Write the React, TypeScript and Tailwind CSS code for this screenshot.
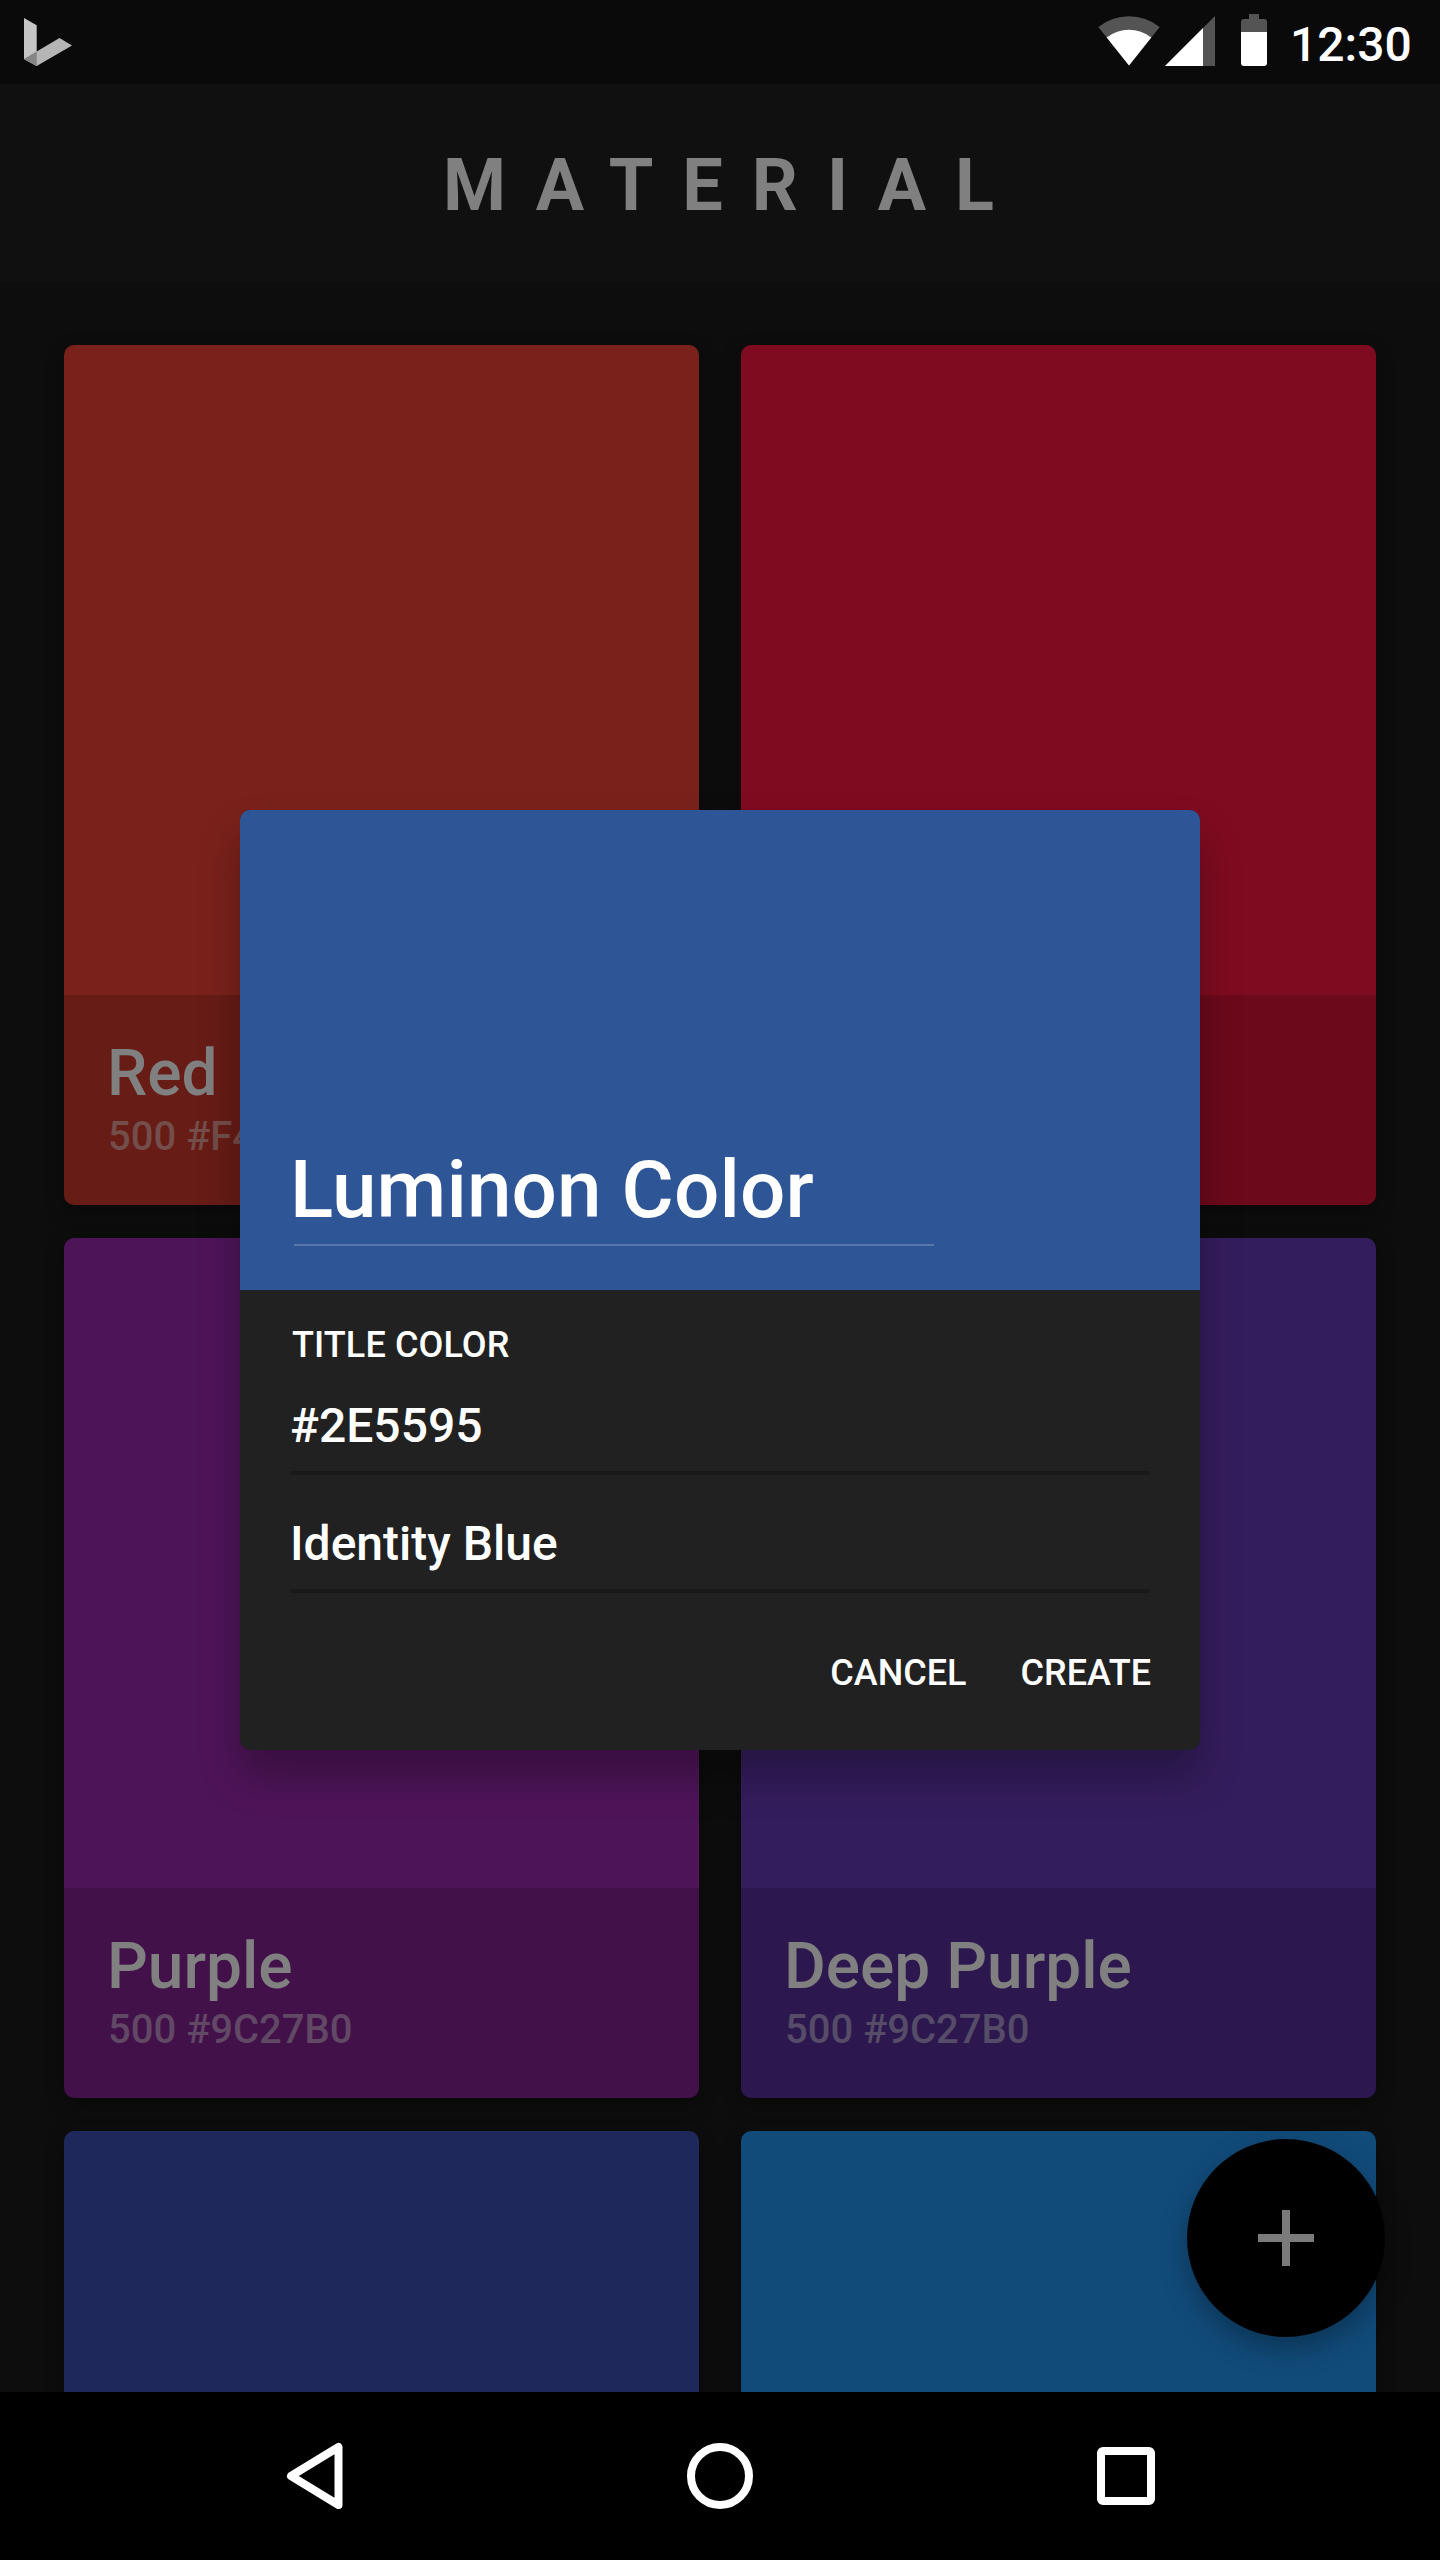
const SWATCHES = [
  { name: "Red", code: "500 #F44336", color: "bg-[#7a211b]" },
  { name: "", code: "", color: "bg-[#7f0b20]" },
  { name: "Purple", code: "500 #9C27B0", color: "bg-[#4e1458]" },
  { name: "Deep Purple", code: "500 #9C27B0", color: "bg-[#341d5c]" },
  { name: "", code: "", color: "bg-[#1f285a]" },
  { name: "", code: "", color: "bg-[#114b7a]" },
];

function StatusBar() {
  return (
    <div className="flex h-[84px] items-start justify-between bg-[#0a0a0a]">
      <svg width="80" height="84" viewBox="0 0 80 84">
        <path d="M24 18l12.7 7.2V66L24 59z" fill="#c5c5c5" />
        <path d="M24 59l35.5-21L72 45.6 36.7 66z" fill="#b5b5b5" />
        <path d="M24 59l12.7-7.5V66z" fill="#858585" />
      </svg>
      <div className="flex">
        <svg width="200" height="84" viewBox="1090 0 200 84">
          <path d="M1129 65.5L1098.3 27a49.5 49.5 0 0 1 61.4 0z" fill="#545454" />
          <path d="M1129 65.5L1106.7 37.5a36 36 0 0 1 44.6 0z" fill="#fff" />
          <path d="M1165 66h50V16z" fill="#545454" />
          <path d="M1165 66h38V28z" fill="#fff" />
          <path d="M1249 14h10v5h5a3 3 0 0 1 3 3v10h-26V22a3 3 0 0 1 3-3h5z" fill="#545454" />
          <path d="M1241 32h26v31a3 3 0 0 1-3 3h-20a3 3 0 0 1-3-3z" fill="#fff" />
        </svg>
        <span className="w-[150px] pt-[17px] text-[48px] leading-[56px] font-medium text-white">12:30</span>
      </div>
    </div>
  );
}

function Swatch({ name, code, color }: { name: string; code: string; color: string }) {
  return (
    <div className={`flex h-[860px] flex-col overflow-hidden rounded-[10px] shadow-[0_6px_18px_rgba(0,0,0,0.35)] ${color}`}>
      <div className="flex-1" />
      <div className="h-[210px] bg-black/15 pt-[41px] pl-[44px] font-medium">
        <div className="-ml-[1px] h-[77px] text-[64px] leading-[75px] text-[#808080]">{name}</div>
        <div className="text-[40px] leading-[47px] text-[#808080]/50">{code}</div>
      </div>
    </div>
  );
}

function Dialog() {
  return (
    <div className="absolute top-[810px] left-[240px] flex h-[940px] w-[960px] flex-col overflow-hidden rounded-[10px] bg-[#212121] text-white shadow-[0_26px_40px_rgba(0,0,0,0.28)]">
      <div className="flex h-[480px] flex-col justify-end bg-[#2e5595] pb-[44px] pl-[50px]">
        <div className="h-[101px] text-[80px] leading-[94px] font-medium tracking-[0.1px]">Luminon Color</div>
        <div className="ml-[4px] h-[2px] w-[640px] bg-white/20" />
      </div>
      <div className="flex flex-1 flex-col px-[50px] pt-[34px] font-medium">
        <div className="pl-[2px] text-[36px] leading-[42px] tracking-[0.1px]">TITLE COLOR</div>
        <div className="mt-[32px] h-[73px] text-[48px] leading-[56px]">#2E5595</div>
        <div className="h-[4px] rounded-full bg-[#191919]" />
        <div className="mt-[41px] h-[73px] text-[48px] leading-[56px]">Identity Blue</div>
        <div className="h-[4px] rounded-full bg-[#191919]" />
        <div className="-mr-[1px] flex justify-end gap-[54px] pt-[59px] text-[36px] leading-[42px]">
          <button>CANCEL</button>
          <button>CREATE</button>
        </div>
      </div>
    </div>
  );
}

export default function App() {
  return (
    <div className="relative flex h-[2560px] w-[1440px] flex-col overflow-hidden bg-[#0d0d0d] font-[Roboto,sans-serif]">
      <StatusBar />
      <header className="flex h-[198px] justify-center bg-[#101010] pt-[60px]">
        <h1 className="pl-[26px] text-[72px] leading-[84px] font-bold tracking-[29px] text-[#808080]">MATERIAL</h1>
      </header>
      <main className="grid min-h-0 flex-1 grid-cols-2 content-start gap-x-[42px] gap-y-[33px] overflow-hidden px-16 pt-[63px]">
        {SWATCHES.map((s, i) => (
          <Swatch key={i} {...s} />
        ))}
      </main>
      <button className="absolute top-[2139px] left-[1187px] flex size-[198px] items-center justify-center rounded-full bg-black shadow-[0_12px_28px_rgba(0,0,0,0.3)]">
        <svg width="56" height="56" viewBox="0 0 56 56" fill="#7b7b7b">
          <path d="M24 0h8v24h24v8H32v24h-8V32H0v-8h24z" />
        </svg>
      </button>
      <nav className="relative h-[168px] bg-black">
        <svg width="1440" height="168" viewBox="0 2392 1440 168" fill="none" stroke="#fff" strokeWidth="8" strokeLinejoin="round">
          <path d="M291 2476l47.5-29v58z" />
          <circle cx="720" cy="2476" r="29" />
          <rect x="1101" y="2451" width="50" height="50" rx="2" />
        </svg>
      </nav>
      <Dialog />
    </div>
  );
}
